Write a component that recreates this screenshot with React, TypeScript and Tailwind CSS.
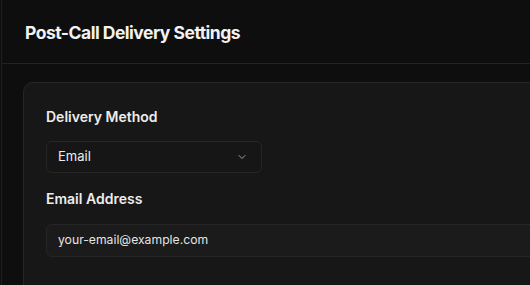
import React from "react";

export default function App() {
  return (
    <div
      className="w-[530px] h-[285px] overflow-hidden bg-[#0e0e0e] flex"
      style={{ fontFamily: "Inter, 'Noto Sans', sans-serif" }}
    >
      <div className="w-px shrink-0 bg-[#0e0e0e]" />
      <div className="flex-1 flex flex-col border-l border-[#1f1f1f] min-w-0">
        <div className="h-[64px] shrink-0 border-b border-[#232323] flex items-center pl-[23px] pt-[3px]">
          <h1 className="text-[17.5px] font-bold text-[#f2f2f2] tracking-[-0.5px]">
            Post-Call Delivery Settings
          </h1>
        </div>
        <div className="pl-[21px] pt-[18px] flex-1 min-w-0">
          <div className="w-[560px] h-[300px] rounded-tl-[10px] border border-[#262626] bg-[#171717] pl-[22px] pt-[24px]">
            <div className="text-[14px] leading-[20px] font-semibold text-[#ededed]">
              Delivery Method
            </div>
            <div className="mt-[14px] w-[216px] h-[32px] rounded-[6px] border border-[#262626] bg-[#161616] flex items-center justify-between pl-[11px] pr-[13px]">
              <span className="text-[13px] text-[#ededed]">Email</span>
              <svg width="12" height="12" viewBox="0 0 24 24" fill="none" stroke="#a3a3a3" strokeWidth="2" strokeLinecap="round" strokeLinejoin="round">
                <path d="M6 9l6 6 6-6" />
              </svg>
            </div>
            <div className="mt-[16px] text-[14px] leading-[20px] font-semibold text-[#ededed]">
              Email Address
            </div>
            <div className="mt-[15px] w-[520px] h-[33px] rounded-[6px] border border-[#262626] bg-[#1b1b1b] flex items-center pl-[11px]">
              <span className="text-[12.2px] text-[#e5e5e5]">your-email@example.com</span>
            </div>
          </div>
        </div>
      </div>
    </div>
  );
}
